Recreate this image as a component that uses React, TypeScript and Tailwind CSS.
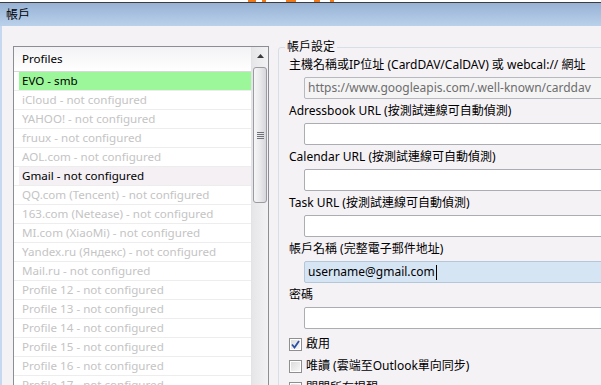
import React from 'react'

const font = { fontFamily: '"Noto Sans", "Noto Sans CJK TC", sans-serif' }

type Profile = { name: string; state: 'active' | 'selected' | 'off' }

const profiles: Profile[] = [
  { name: 'EVO - smb', state: 'active' },
  { name: 'iCloud - not configured', state: 'off' },
  { name: 'YAHOO! - not configured', state: 'off' },
  { name: 'fruux - not configured', state: 'off' },
  { name: 'AOL.com - not configured', state: 'off' },
  { name: 'Gmail - not configured', state: 'selected' },
  { name: 'QQ.com (Tencent) - not configured', state: 'off' },
  { name: '163.com (Netease) - not configured', state: 'off' },
  { name: 'MI.com (XiaoMi) - not configured', state: 'off' },
  { name: 'Yandex.ru (Яндекс) - not configured', state: 'off' },
  { name: 'Mail.ru - not configured', state: 'off' },
  { name: 'Profile 12 - not configured', state: 'off' },
  { name: 'Profile 13 - not configured', state: 'off' },
  { name: 'Profile 14 - not configured', state: 'off' },
  { name: 'Profile 15 - not configured', state: 'off' },
  { name: 'Profile 16 - not configured', state: 'off' },
  { name: 'Profile 17 - not configured', state: 'off' },
]

const ProfileRow: React.FC<{ p: Profile }> = ({ p }) => {
  const bg =
    p.state === 'active' ? 'bg-[#9cf79a]' : p.state === 'selected' ? 'bg-[#f4f0f4]' : 'bg-white'
  const color = p.state === 'off' ? 'text-[#c4c4c4]' : 'text-black'
  return (
    <div className="h-[19px] border-b border-[#ededed] shrink-0">
      <div className={`ml-[5px] h-[18px] pl-[3px] flex items-center whitespace-nowrap ${bg} ${color}`}>
        {p.name}
      </div>
    </div>
  )
}

const ScrollBar: React.FC = () => (
  <div className="w-[17px] shrink-0 bg-gradient-to-r from-[#e6e6e9] to-[#f2f2f4] border-l border-[#e3e3e6] flex flex-col">
    <div className="h-[17px] flex items-center justify-center">
      <svg width="7" height="4" viewBox="0 0 7 4">
        <path d="M3.5 0 L7 4 L0 4 Z" fill="#3a3a3a" />
      </svg>
    </div>
    <div className="mt-[3px] mx-[1px] h-[136px] rounded-[3px] border border-[#9a9ca2] bg-gradient-to-r from-[#f6f6f7] via-[#e9e9ec] to-[#d6d7db] flex items-center justify-center">
      <div className="flex flex-col gap-[1px]">
        <div className="w-[7px] h-[1px] bg-[#6f7278]" />
        <div className="w-[7px] h-[1px] bg-[#6f7278]" />
        <div className="w-[7px] h-[1px] bg-[#6f7278]" />
        <div className="w-[7px] h-[1px] bg-[#6f7278]" />
      </div>
    </div>
  </div>
)

const Field: React.FC<{ label: string; value?: string; variant?: 'disabled' | 'focus' | 'plain' }> = ({
  label,
  value = '',
  variant = 'plain',
}) => {
  const box =
    variant === 'disabled'
      ? 'bg-[#f4f4f5] border-[#b7b9bf] text-[#6d6d6d]'
      : variant === 'focus'
        ? 'bg-[#d6e5f4] border-[#b3c6da] text-black'
        : 'bg-white border-[#abadb3] text-black'
  return (
    <div className="flex flex-col">
      <div className="h-[24px] flex items-center whitespace-nowrap">{label}</div>
      <div className={`ml-[15px] h-[22px] border rounded-[2px] pl-[3px] flex items-center whitespace-nowrap ${box}`}>
        {value}
        {variant === 'focus' && <span className="w-[1px] h-[15px] bg-black ml-[1px]" />}
      </div>
    </div>
  )
}

const Check: React.FC<{ label: string; checked?: boolean }> = ({ label, checked }) => (
  <div className="h-[22px] flex items-center gap-[4px] whitespace-nowrap">
    <div className="w-[13px] h-[13px] border border-[#8f8f8f] bg-white p-[1px] shrink-0">
      <div className="w-full h-full bg-gradient-to-br from-[#dcdcdc] to-[#f8f8f8] flex items-center justify-center">
        {checked && (
          <svg width="9" height="9" viewBox="0 0 9 9">
            <path d="M1 4.5 L3.5 7.5 L8 1" stroke="#2c4ea6" strokeWidth="1.8" fill="none" />
          </svg>
        )}
      </div>
    </div>
    <span>{label}</span>
  </div>
)

export default function App() {
  return (
    <div className="w-[601px] h-[385px] overflow-hidden flex flex-col bg-[#f5f2f6] text-[12px] text-black" style={font}>
      {/* strip of the window behind */}
      <div className="h-[2px] bg-white flex shrink-0">
        <div className="ml-[248px] w-[8px] bg-[#f07a1a]" />
        <div className="ml-[6px] w-[4px] bg-[#f07a1a]" />
        <div className="ml-[20px] w-[10px] bg-[#f07a1a]" />
        <div className="ml-[18px] w-[6px] bg-[#f07a1a]" />
        <div className="ml-[10px] w-[4px] bg-[#f07a1a]" />
      </div>
      <div className="h-[1px] bg-[#3c3c3c] shrink-0" />

      {/* title bar */}
      <div className="h-[23px] shrink-0 bg-gradient-to-b from-[#97b2d5] to-[#bad1ea] pl-[6px] flex items-center">
        帳戶
      </div>

      {/* body */}
      <div className="flex-1 flex border-l-2 border-[#c6d8ef] pl-[11px] pt-[20px]">
        {/* profile list */}
        <div className="w-[256px] h-[400px] shrink-0 border border-[#8c8e94] bg-white flex text-[11.6px]">
          <div className="flex-1 flex flex-col overflow-hidden">
            <div className="h-[25px] shrink-0 border-b border-[#d8d8d8] bg-gradient-to-b from-[#f3f3f5] to-white pl-[8px] flex items-center">
              Profiles
            </div>
            {profiles.map((p) => (
              <ProfileRow key={p.name} p={p} />
            ))}
          </div>
          <ScrollBar />
        </div>

        {/* account settings group */}
        <div className="ml-[9px] mt-[1px] w-[340px] h-[400px] shrink-0 border border-[#d5dfe5] rounded-[3px] pl-[10px] pt-[5px] flex flex-col">
          <div className="-mt-[14px] -mb-[2px] self-start px-[2px] -ml-[4px] bg-[#f5f2f6] leading-[16px]">帳戶設定</div>
          <Field
            label="主機名稱或IP位址 (CardDAV/CalDAV) 或 webcal:// 網址"
            value="https://www.googleapis.com/.well-known/carddav"
            variant="disabled"
          />
          <Field label="Adressbook URL (按測試連線可自動偵測)" />
          <Field label="Calendar URL (按測試連線可自動偵測)" />
          <Field label="Task URL (按測試連線可自動偵測)" />
          <Field label="帳戶名稱 (完整電子郵件地址)" value="username@gmail.com" variant="focus" />
          <Field label="密碼" />
          <div className="mt-[4px] flex flex-col">
            <Check label="啟用" checked />
            <Check label="唯讀 (雲端至Outlook單向同步)" />
            <Check label="關閉所有提醒" />
          </div>
        </div>
      </div>
    </div>
  )
}
